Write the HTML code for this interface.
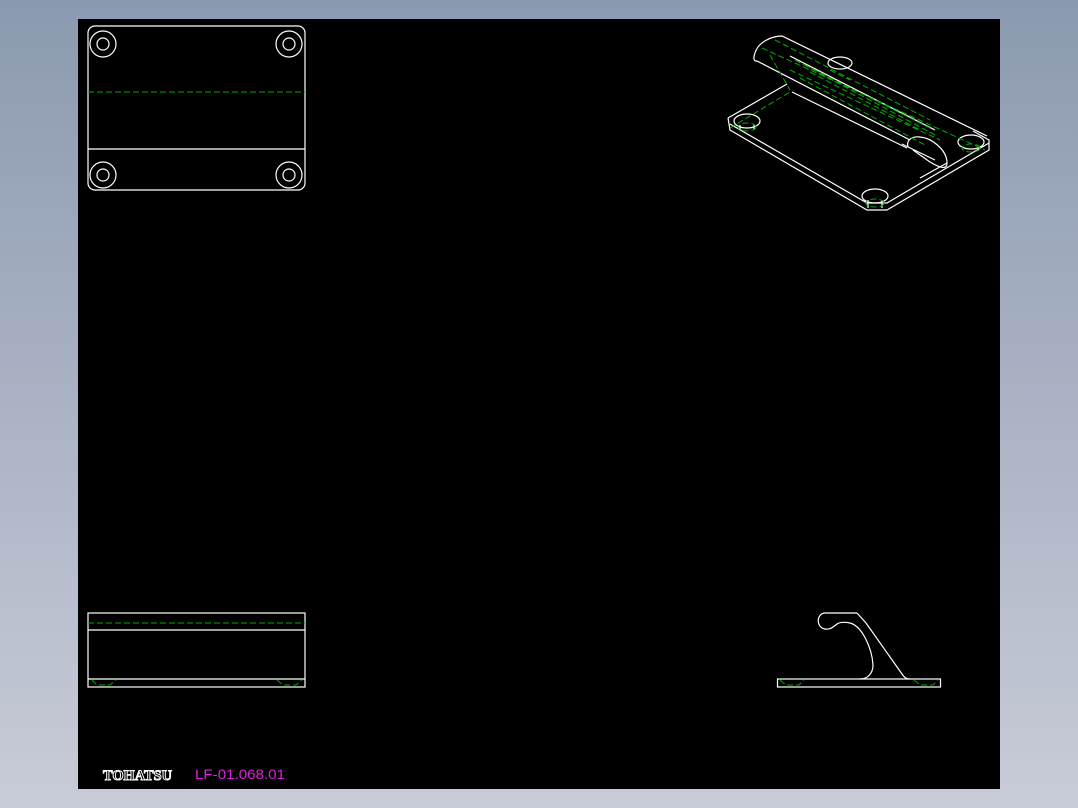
<!DOCTYPE html>
<html><head><meta charset="utf-8"><style>
html,body{margin:0;padding:0;width:1078px;height:808px;overflow:hidden;background:linear-gradient(#8b9ab0,#c9ccd8);}
svg{position:absolute;left:0;top:0}
</style></head><body>
<svg width="1078" height="808" viewBox="0 0 1078 808">
<rect x="78" y="19" width="922" height="770" fill="#000"/>
<g fill="none" stroke="#fff" stroke-width="1.2">
<rect x="88" y="26" width="217" height="164" rx="7"/>
<line x1="88" y1="149" x2="305" y2="149"/>
<circle cx="103" cy="44" r="13"/><circle cx="103" cy="44" r="6"/>
<circle cx="289" cy="44" r="13"/><circle cx="289" cy="44" r="6"/>
<circle cx="103" cy="175" r="13"/><circle cx="103" cy="175" r="6"/>
<circle cx="289" cy="175" r="13"/><circle cx="289" cy="175" r="6"/>
<rect x="88" y="613" width="217" height="74"/>
<line x1="88" y1="630" x2="305" y2="630"/>
<line x1="88" y1="679" x2="305" y2="679"/>
<rect x="777.5" y="679" width="163" height="8"/>
<path d="M857,613 L825,613 C817,613 815,627 825,629 C830,630 833,627 837,624 C840,622 845,622 850,623 C862,626 872,648 873,665 C873,673 868,679 860,679"/>
<path d="M857,613 L866,623 L902,674 C904,677 906,679 910,679"/>
<path d="M728,118 L787,84"/>
<path d="M728,118 L730,130 L867,210 L887,210 L989,150 L989,140 L973,131"/>
<path d="M730,124 L867,203 L887,203 L989,143"/>
<path d="M755,53 C758,42 772,36 782,36 L987,136"/>
<path d="M755,53 C753,58 754,62 757,61 L910,140"/>
<path d="M792,92 L907,148"/>
<path d="M790,56 L935,130"/>
<path d="M908,147 C906,140 912,136 920,137 C932,138 947,150 947,163 C947,170 940,168 930,162 L913,150"/>
<path d="M902,144 L935,160"/>
<path d="M947,163 L920,178"/>
<ellipse cx="747" cy="121" rx="13" ry="7"/>
<ellipse cx="875" cy="196" rx="13" ry="7"/>
<ellipse cx="971" cy="142" rx="13" ry="7"/>
<ellipse cx="840" cy="63" rx="12" ry="6"/>
<path d="M740,125 l0,5 M754,125 l0,5 M868,200 l0,8 M882,200 l0,8"/>
</g>
<g fill="none" stroke="#0a0" stroke-width="1" stroke-dasharray="6,3">
<line x1="88" y1="92" x2="305" y2="92"/>
<line x1="88" y1="623" x2="305" y2="623"/>
<path d="M92,680 L97,685 L110,685 L116,680 M277,680 L283,685 L296,685 L302,680"/>
<path d="M780,680 L786,685 L799,685 L804,680 M914,680 L920,685 L933,685 L938,680"/>
<path d="M762,48 L985,150 M775,40 L930,120 M790,70 L940,140 M795,60 L935,135 M800,78 L925,145 M805,65 L930,128 M810,72 L920,130 M730,128 L790,92 M770,55 L790,90 M830,70 L850,80"/>
<ellipse cx="747" cy="127" rx="9" ry="4"/><ellipse cx="875" cy="203" rx="9" ry="4"/><ellipse cx="971" cy="148" rx="9" ry="4"/>
</g>
<text x="103" y="780" font-family="Liberation Serif, serif" font-weight="bold" font-size="15" fill="#000" stroke="#fff" stroke-width="1" textLength="69" lengthAdjust="spacingAndGlyphs">TOHATSU</text>
<text x="195" y="779" font-family="Liberation Sans, sans-serif" font-size="14" fill="#e020e0" textLength="90" lengthAdjust="spacingAndGlyphs">LF-01.068.01</text>
</svg>
</body></html>
